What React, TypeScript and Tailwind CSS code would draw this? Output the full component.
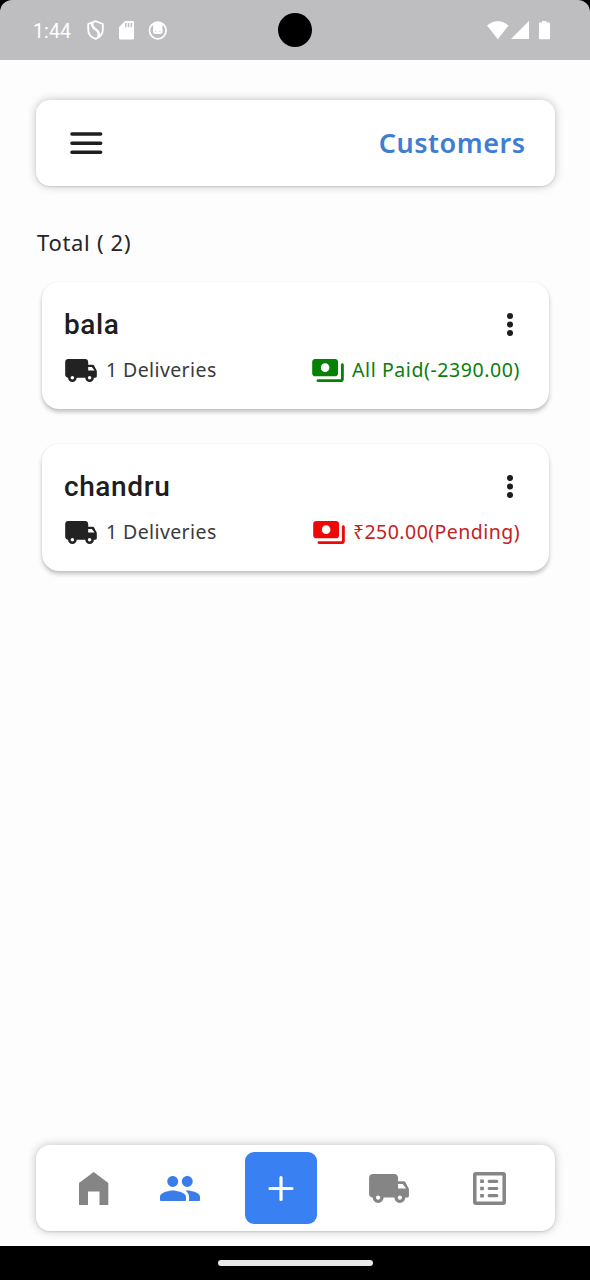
import React from "react";

type IconProps = { className?: string };

function Truck({ className }: IconProps) {
  return (
    <svg viewBox="1 4 22 16" className={className} fill="currentColor" fillRule="evenodd">
      <path d="M20.2 8H17V6c0-1.1-.9-2-2-2H3c-1.1 0-2 .9-2 2v9c0 1.1.9 2 2 2 0 1.66 1.34 3 3 3s3-1.34 3-3h6c0 1.66 1.34 3 3 3s3-1.34 3-3h1c.55 0 1-.45 1-1v-3.330c0-.43-.14-.85-.4-1.200L21 8.400c-.19-.25-.49-.4-.8-.4zM6 18.200c-.66 0-1.200-.54-1.200-1.200s.54-1.200 1.200-1.200 1.200.54 1.200 1.200-.54 1.200-1.200 1.200zm12 0c-.66 0-1.200-.54-1.200-1.200s.54-1.200 1.200-1.200 1.200.54 1.200 1.200-.54 1.200-1.200 1.200zM17 12V9.500h2.500l1.960 2.500H17z" />
    </svg>
  );
}

function Payments({ className }: IconProps) {
  return (
    <svg viewBox="1 4 22 16" className={className} fill="currentColor" fillRule="evenodd">
      <path d="M19 14V6c0-1.1-.9-2-2-2H3c-1.1 0-2 .9-2 2v8c0 1.1.9 2 2 2h14c1.1 0 2-.9 2-2zm-9-1c-1.66 0-3-1.34-3-3s1.34-3 3-3 3 1.34 3 3-1.34 3-3 3z" />
      <path d="M23 8v10c0 1.1-.9 2-2 2H5c-.55 0-1-.45-1-1s.45-1 1-1h16V8c0-.55.45-1 1-1s1 .45 1 1z" />
    </svg>
  );
}

function StatusBar() {
  return (
    <div className="bg-black">
      <header className="flex h-[60px] items-center rounded-t-[12px] bg-[#bebec0] pl-[33px] pr-[39px] text-white">
        <span className="w-[54px] whitespace-nowrap pt-[3px] font-['Roboto',sans-serif] text-[19.5px] leading-none tracking-[0.1px]">1:44</span>
        <svg width="17" height="20" viewBox="0 0 17 20" fill="none" stroke="currentColor" strokeWidth="1.8">
          <path d="M8.5 1.2 15.8 4v5.8c0 4-3 7.5-7.3 9.1-4.3-1.6-7.3-5.1-7.3-9.1V4L8.5 1.2Z" strokeLinejoin="round" />
          <path d="M5.3 2.6c-.6 3.1.2 4.9 3.2 6.7 3.2 2 4 4.2 2.9 7.9" strokeWidth="2.4" />
        </svg>
        <svg width="16" height="19" viewBox="0 0 16 19" className="ml-[15px]" fill="currentColor" fillRule="evenodd">
          <path d="M6 0h7.5C14.4 0 15 .7 15 1.6v15.300c0 .9-.7 1.600-1.600 1.600H1.600C.7 18.500 0 17.800 0 16.900V6L6 0ZM6 2v4.200h1.500V2H6Zm2.800 0v4.200h1.500V2H8.800Zm2.800 0v4.200h1.500V2h-1.500Z" />
        </svg>
        <svg width="19" height="19" viewBox="0 0 19 19" className="ml-[13px]">
          <circle cx="9.800" cy="9.500" r="8.300" fill="none" stroke="currentColor" strokeWidth="1.700" />
          <path d="M4 3.600C7 .8 12.600.8 15.600 3.600l-1.300 1.900.3 5.800c-.5 1.100-1.300 1.700-2.400 1.700H7.400c-1.100 0-1.900-.6-2.400-1.700l.3-5.800L4 3.600Z" fill="currentColor" />
          <path d="M7.200 10.400h1M11.400 10.400h1" stroke="#bebec0" strokeWidth="1" />
        </svg>
        <span className="ml-[111px] h-[34px] w-[34px] rounded-full bg-black" />
        <svg width="64" height="19" viewBox="0 0 64 19" className="ml-auto" fill="currentColor">
          <path d="M0 4.600C6.200-1.200 15.300-1.200 21.500 4.600L10.800 18.200 0 4.600Z" />
          <path d="M24 18 42 0v18H24Z" />
          <path d="M55 0h4.500v1.500h2.700c.5 0 .8.3.8.800v15.200c0 .5-.3.800-.8.800h-9.400c-.5 0-.8-.3-.8-.800V2.300c0-.5.3-.8.800-.8H55V0Z" />
        </svg>
      </header>
    </div>
  );
}

type Customer = { name: string; deliveries: string; status: string; paid: boolean };

const customers: Customer[] = [
  { name: "bala", deliveries: "1 Deliveries", status: "All Paid(-2390.00)", paid: true },
  { name: "chandru", deliveries: "1 Deliveries", status: "₹250.00(Pending)", paid: false },
];

function CustomerCard({ name, deliveries, status, paid }: Customer) {
  return (
    <article className="flex h-[127px] flex-col rounded-[17px] bg-white pl-[22px] pr-[29px] shadow-[0_3px_4px_rgba(0,0,0,0.24),0_0_2px_rgba(0,0,0,0.06)]">
      <div className="mt-[24px] flex h-[38px] items-center justify-between">
        <h2 className="font-['Roboto',sans-serif] text-[28px] font-medium leading-[38px] tracking-[0.6px] text-[#1d1d1e]">{name}</h2>
        <svg width="8" height="24" viewBox="0 0 8 24" className="mr-[6px]" fill="#1d1d1e">
          <circle cx="4" cy="3" r="3" />
          <circle cx="4" cy="11.500" r="3" />
          <circle cx="4" cy="20" r="3" />
        </svg>
      </div>
      <div className="mt-[14px] flex h-[24px] items-center font-['Noto_Sans',sans-serif] text-[19.5px] leading-6">
        <Truck className="ml-px h-[23px] w-8 text-[#222223]" />
        <span className="ml-[9px] whitespace-nowrap tracking-[0.4px] text-[#3a3a3b]">{deliveries}</span>
        <div className={paid ? "ml-auto flex items-center text-[#0b7d0d]" : "ml-auto flex items-center text-[#c5211f]"}>
          <Payments className={paid ? "h-[23px] w-8 text-[#058205]" : "h-[23px] w-8 text-[#ee0808]"} />
          <span className={paid ? "ml-[8px] whitespace-nowrap tracking-[0.58px]" : "ml-[8px] whitespace-nowrap tracking-[0.46px]"}>{status}</span>
        </div>
      </div>
    </article>
  );
}

function BottomNav() {
  return (
    <nav className="mx-9 mb-[15px] mt-auto flex h-[86px] w-[518.5px] items-center rounded-[14px] bg-white pl-[43px] shadow-[0_0_10px_rgba(0,0,0,0.24),0_1px_2px_rgba(0,0,0,0.1)]">
      <svg width="30" height="33" viewBox="0 0 30 33" fill="#858585">
        <path d="M0 11 14.700 0 29.300 11v22H20.500V19.500H9V33H0V11Z" />
      </svg>
      <svg width="40" height="25.500" viewBox="1 5 22 14" className="ml-[51px] mt-px" fill="#3b7de8">
        <path d="M16 11c1.660 0 2.990-1.340 2.990-3S17.660 5 16 5c-1.660 0-3 1.340-3 3s1.340 3 3 3zM8 11c1.660 0 2.990-1.340 2.990-3S9.660 5 8 5 5 6.340 5 8s1.340 3 3 3zM8 13c-2.330 0-7 1.170-7 3.500V18c0 .55.45 1 1 1h12.300c.55 0 1-.45 1-1v-1.500c0-2.330-4.970-3.500-7.300-3.500zM16 13c-.29 0-.62.02-.97.05 1.160.84 1.970 1.970 1.970 3.450V18c0 .35-.07.69-.18 1H22c.55 0 1-.45 1-1v-1.500c0-2.330-4.670-3.500-7-3.500z" />
      </svg>
      <button className="ml-[45px] flex h-[72px] w-[72px] items-center justify-center rounded-[9px] bg-[#3980f2]">
        <svg width="26" height="26" viewBox="0 0 26 26" fill="none" stroke="white" strokeWidth="3.200" strokeLinecap="round">
          <path d="M13 2.500v22M2 13.500h22" />
        </svg>
      </button>
      <Truck className="ml-[52px] mt-px h-[29px] w-10 text-[#858585]" />
      <svg width="33" height="33" viewBox="0 0 33 33" className="ml-[64px]" fill="none" stroke="#858585">
        <rect x="1.800" y="1.800" width="29.400" height="29.400" rx="1" strokeWidth="3.500" />
        <path d="M16.200 9.300h7.600M16.200 16.500h7.600M16.200 23.700h7.600" strokeWidth="3.200" strokeLinecap="round" />
        <path d="M7.200 9.300h3.700M7.200 16.500h3.700M7.200 23.700h3.700" strokeWidth="3.600" />
      </svg>
    </nav>
  );
}

export default function App() {
  return (
    <div className="flex h-[1280px] w-[590px] flex-col overflow-hidden bg-[#fdfdfe]">
      <StatusBar />
      <section className="mx-9 mt-10 flex h-[86px] w-[518.5px] items-center justify-between rounded-[14px] bg-white pl-[34px] pr-[29px] shadow-[0_0_10px_rgba(0,0,0,0.24),0_1px_2px_rgba(0,0,0,0.1)]">
        <svg width="33" height="24" viewBox="0 0 33 24" fill="none" stroke="#1f1f20" strokeWidth="3.400" strokeLinecap="round">
          <path d="M1.900 3h28.800M1.900 12.200h28.800M1.900 21.200h28.800" />
        </svg>
        <h1 className="whitespace-nowrap font-['Noto_Sans',sans-serif] text-[27px] font-semibold leading-9 tracking-[0.5px] text-[#3f7cd6]">Customers</h1>
      </section>
      <p className="ml-[37px] mt-[41px] h-[31px] whitespace-nowrap font-['Noto_Sans',sans-serif] text-[22px] leading-[30px] tracking-[0.7px] text-[#252526]">Total ( 2)</p>
      <main className="ml-[42px] mt-[24px] flex w-[507px] flex-col gap-[35px]">
        {customers.map((c) => (
          <CustomerCard key={c.name} {...c} />
        ))}
      </main>
      <BottomNav />
      <footer className="flex h-[34px] shrink-0 items-center justify-center bg-black">
        <span className="h-[6px] w-[155px] rounded-full bg-[#e9e9e9]" />
      </footer>
    </div>
  );
}
